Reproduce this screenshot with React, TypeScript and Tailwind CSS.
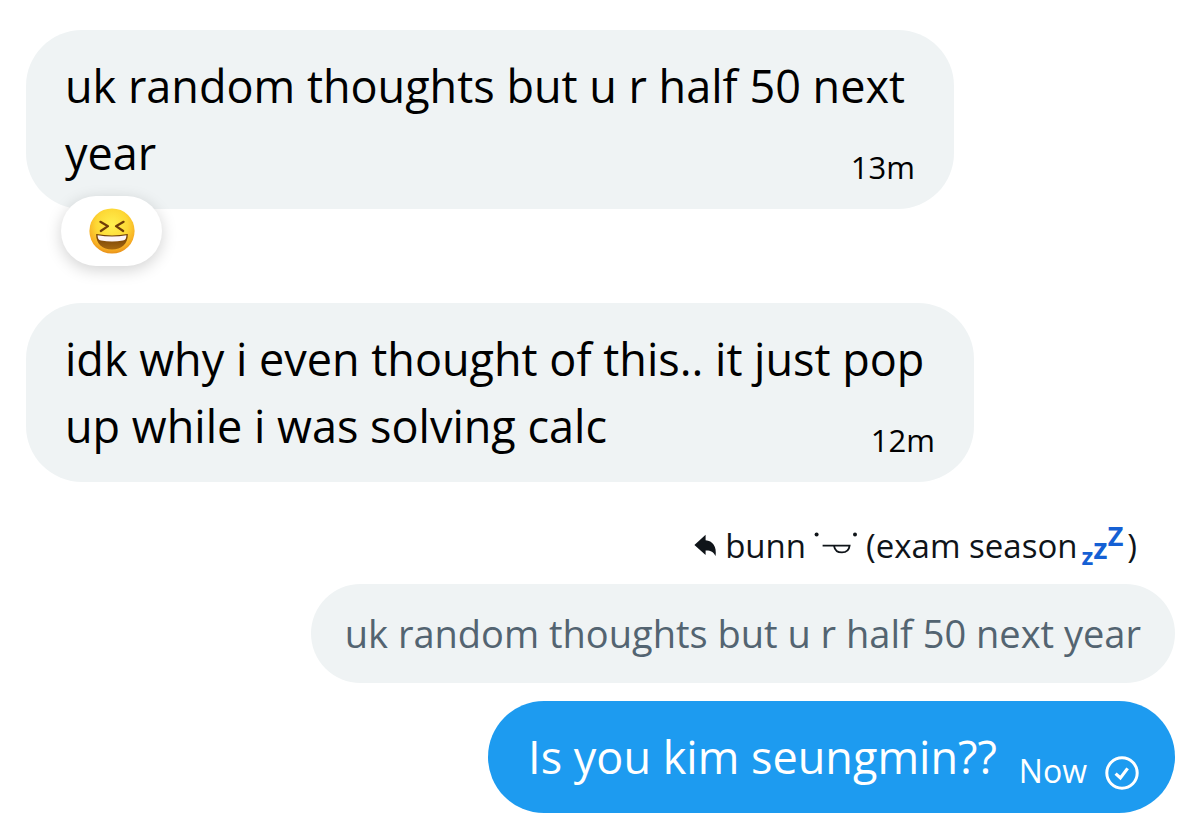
import React from "react";

interface IncomingMessage {
  id: number;
  lines: string[];
  time: string;
  width: string;
  reaction?: boolean;
}

const incoming: IncomingMessage[] = [
  {
    id: 1,
    lines: ["uk random thoughts but u r half 50 next", "year"],
    time: "13m",
    width: "max-w-[928px]",
    reaction: true,
  },
  {
    id: 2,
    lines: [
      "idk why i even thought of this.. it just pop",
      "up while i was solving calc",
    ],
    time: "12m",
    width: "max-w-[948px]",
  },
];

const LaughEmoji = () => (
  <svg viewBox="0 0 46 46" className="size-[46px]" role="img" aria-label="laughing">
    <defs>
      <radialGradient id="face" cx="50%" cy="36%" r="64%">
        <stop offset="0%" stopColor="#fff04f" />
        <stop offset="55%" stopColor="#fdd835" />
        <stop offset="85%" stopColor="#f8b024" />
        <stop offset="100%" stopColor="#e8901a" />
      </radialGradient>
      <linearGradient id="mouth" x1="0" y1="0" x2="0" y2="1">
        <stop offset="0%" stopColor="#6b3a06" />
        <stop offset="100%" stopColor="#a8690f" />
      </linearGradient>
    </defs>
    <circle cx="23" cy="23" r="22.6" fill="url(#face)" />
    <path
      d="M11.4 13.8 L19 18.2 L11.8 23"
      fill="none"
      stroke="#6f3d08"
      strokeWidth="2.2"
      strokeLinecap="round"
      strokeLinejoin="round"
    />
    <path
      d="M34.6 13.8 L27 18.2 L34.2 23"
      fill="none"
      stroke="#6f3d08"
      strokeWidth="2.2"
      strokeLinecap="round"
      strokeLinejoin="round"
    />
    <path
      d="M7.2 26 Q23 28.8 38.8 26 C39.2 35.6 32.4 41.6 23 41.6 C13.6 41.6 6.8 35.6 7.2 26Z"
      fill="url(#mouth)"
    />
    <path
      d="M8.6 27.2 Q23 29.8 37.4 27.2 Q37.6 31.8 34 32.6 Q23 34.4 12 32.6 Q8.4 31.8 8.6 27.2Z"
      fill="#fdf4f6"
    />
  </svg>
);

const ReplyIcon = () => (
  <svg viewBox="0 0 23 23" className="mr-2 size-[23px]" fill="#0f1419" aria-hidden="true">
    <path d="M0.4 11 L11.6 0.8 V6.2 C18.6 6.6 23 12.4 21.6 22 C19.4 17.8 16.6 16.2 11.6 16.4 V21Z" />
  </svg>
);

const SleepyFace = () => (
  <svg viewBox="0 0 44 24" className="mx-2 mb-2 h-6 w-11" role="img" aria-label="sleepy face">
    <circle cx="2.6" cy="4.6" r="2" fill="#0f1419" />
    <circle cx="41" cy="4.6" r="2" fill="#0f1419" />
    <path
      d="M8.6 15.6 H35.6 C35 20.8 31.6 22.4 28 22.4 C24 22.4 20.8 20.6 20 15.8"
      fill="none"
      stroke="#0f1419"
      strokeWidth="1.8"
    />
  </svg>
);

const CheckIcon = () => (
  <svg viewBox="0 0 34 34" className="size-[34px]" fill="none" stroke="#fff" role="img" aria-label="Sent">
    <circle cx="17" cy="17" r="15.2" strokeWidth="3" />
    <path d="M10.6 17.6 L15.4 22 L22.6 12.4" strokeWidth="3.2" />
  </svg>
);

const App = () => {
  return (
    <main className="flex flex-col bg-white pt-[30px] pr-[25px] pb-7 pl-[26px] font-['Open_Sans',sans-serif] text-black">
      {incoming.map((msg) => (
        <div key={msg.id} className="mb-[37px]">
          <div
            className={`flex w-full items-end justify-between rounded-[56px] bg-[#eff3f4] px-[39px] pt-[22px] pb-[23px] ${msg.width}`}
          >
            <p className="text-[45px] leading-[67px] whitespace-nowrap">
              {msg.lines.map((line, index) => (
                <span key={index} className="block">
                  {line}
                </span>
              ))}
            </p>
            <time className="-ml-20 text-[31px] leading-[38px]">{msg.time}</time>
          </div>
          {msg.reaction && (
            <button
              type="button"
              className="relative -mt-[13px] ml-[35px] flex h-[70px] w-[101px] items-center justify-center rounded-full bg-white shadow-[0_4px_16px_rgba(0,0,0,0.18)]"
            >
              <LaughEmoji />
            </button>
          )}
        </div>
      ))}

      <section className="flex flex-col items-end">
        <div className="flex h-[65px] items-center pr-[38px] pb-3 text-[33px] leading-[40px] text-[#0f1419]">
          <ReplyIcon />
          <span>bunn</span>
          <SleepyFace />
          <span>(exam season</span>
          <span className="mx-1 flex items-end font-['Noto_Sans',sans-serif] font-bold text-[#1560d4]">
            <span className="text-[24px] leading-[20px]">z</span>
            <span className="pb-2 text-[29px] leading-[20px]">z</span>
            <span className="pb-5 text-[27px] leading-[20px]">Z</span>
          </span>
          <span>)</span>
        </div>
        <p className="rounded-full bg-[#eff3f4] px-[34px] py-[22px] text-[38px] leading-[55px] text-[#536471]">
          uk random thoughts but u r half 50 next year
        </p>
        <div className="mt-[18px] flex items-end rounded-full bg-[#1d9bf0] pt-[22px] pr-9 pb-[23px] pl-10 text-white">
          <p className="text-[45px] leading-[67px]">Is you kim seungmin??</p>
          <time className="ml-[22px] text-[32px] leading-[38px]">Now</time>
          <span className="ml-[18px]">
            <CheckIcon />
          </span>
        </div>
      </section>
    </main>
  );
};

export default App;
